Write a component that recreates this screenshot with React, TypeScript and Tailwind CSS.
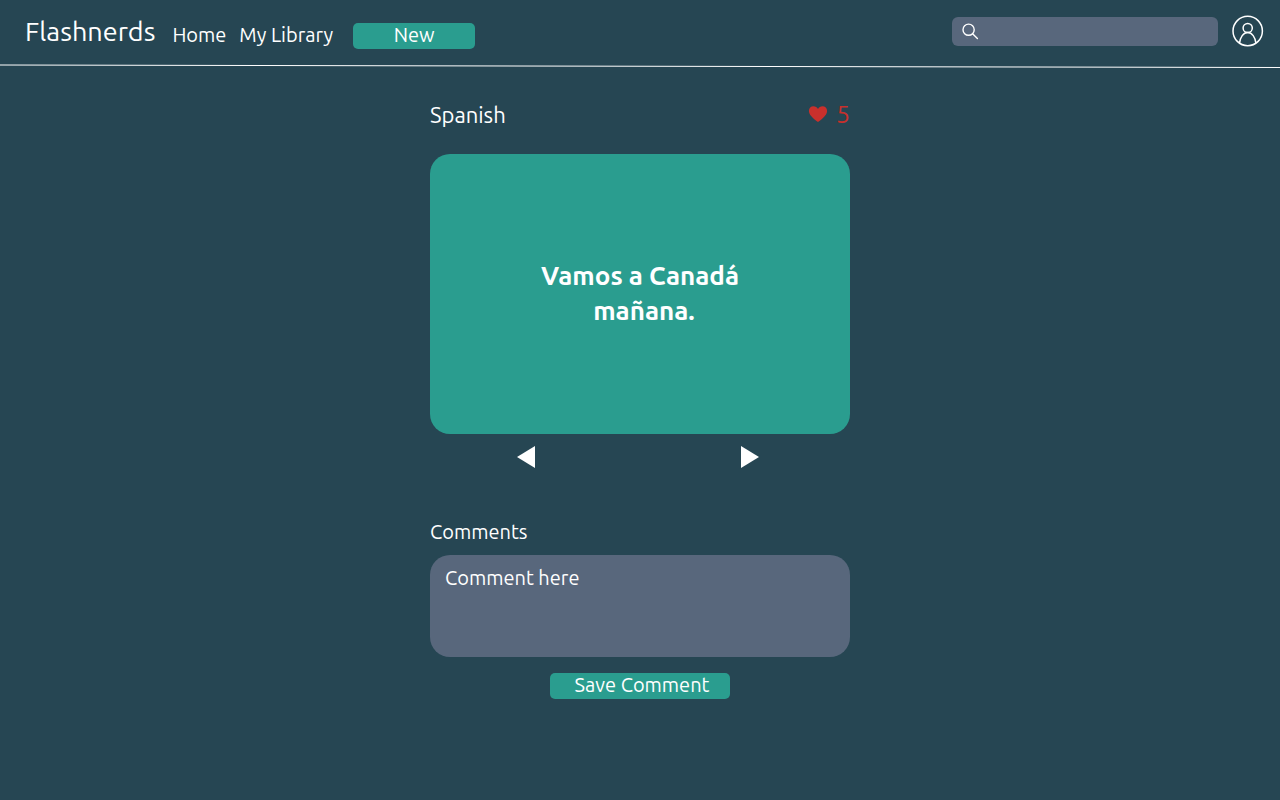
import { useState } from "react";

function SearchIcon() {
  return (
    <svg viewBox="0 0 18 18" className="size-[18px]" fill="none" stroke="currentColor" strokeWidth="1.4" strokeLinecap="round" aria-hidden="true">
      <circle cx="6.6" cy="7.7" r="5.6" />
      <path d="M10.600 11.700 15.400 16.500" />
    </svg>
  );
}

function ProfileIcon() {
  return (
    <svg viewBox="0 0 32 32" className="size-8" fill="none" stroke="currentColor" strokeWidth="1.5" aria-hidden="true">
      <circle cx="15.7" cy="16" r="14.7" />
      <circle cx="15.7" cy="13" r="4.6" />
      <path d="M7.500 28.200C8.200 22.200 11.300 17.600 15.700 17.600s7.500 4.600 8.200 10.600" />
    </svg>
  );
}

function HeartIcon() {
  return (
    <svg viewBox="0 0 20 18" className="h-[18px] w-5" fill="currentColor" aria-hidden="true">
      <path d="M10 17C7.500 15 .9 10.700.9 5.900.9 3.200 2.900 1.200 5.500 1.200 7.400 1.200 9 2.200 10 4c1-1.800 2.600-2.800 4.500-2.800 2.600 0 4.600 2 4.600 4.700C19.100 10.700 12.500 15 10 17Z" />
    </svg>
  );
}

function Header() {
  return (
    <header>
      <div className="flex h-16 items-start justify-between pr-4 pl-[25px]">
        <div className="flex items-start">
          <a href="#" className="pt-[15px] text-[27px] leading-8">Flashnerds</a>
          <nav className="flex gap-[13px] pt-[23px] pl-[17px] text-[20px] leading-6">
            <a href="#home">Home</a>
            <a href="#library">My Library</a>
          </nav>
          <button type="button" className="mt-[23px] ml-5 h-[26px] w-[122px] rounded-[5px] bg-[#2a9d8f] pb-[2px] text-[20px] leading-6">
            New
          </button>
        </div>
        <div className="flex items-center gap-[14px] pt-[15px]">
          <label className="flex h-[29px] w-[266px] items-center gap-2 rounded-md bg-[#58677c] pr-3 pl-[10px]">
            <SearchIcon />
            <input type="search" aria-label="Search" className="min-w-0 flex-1 bg-transparent text-base outline-none" />
          </label>
          <button type="button" aria-label="Profile">
            <ProfileIcon />
          </button>
        </div>
      </div>
      <svg viewBox="0 0 1280 4" preserveAspectRatio="none" className="block h-1 w-full" aria-hidden="true">
        <path d="M0 1 1280 3.500" stroke="white" strokeWidth="1" />
      </svg>
    </header>
  );
}

export default function App() {
  const [comment, setComment] = useState("");

  return (
    <div className="min-h-screen bg-[#264653] font-['Ubuntu','Noto_Sans',sans-serif] text-white">
      <Header />
      <main className="mx-auto flex w-full max-w-[420px] flex-col pt-8">
        <div className="flex h-8 items-start justify-between">
          <h1 className="text-[22px] leading-[30px]">Spanish</h1>
          <button type="button" aria-label="5 likes" className="flex items-center gap-2 text-[#c9302c]">
            <HeartIcon />
            <span className="text-[25px] leading-7">5</span>
          </button>
        </div>

        <section className="mt-[22px] flex h-[280px] items-center justify-center rounded-[20px] bg-[#2a9d8f] pb-[2px]">
          <p className="text-center text-[26px] leading-[35px] font-bold">
            Vamos a Canadá
            <br />
            <span className="pl-2">mañana.</span>
          </p>
        </section>

        <div className="flex justify-between pt-3 pr-[91px] pl-[87px]">
          <button type="button" aria-label="Previous card">
            <svg viewBox="0 0 18 22" className="h-[22px] w-[18px]" fill="currentColor" aria-hidden="true">
              <path d="M18 0v22L0 11Z" />
            </svg>
          </button>
          <button type="button" aria-label="Next card">
            <svg viewBox="0 0 18 22" className="h-[22px] w-[18px]" fill="currentColor" aria-hidden="true">
              <path d="M0 0v22l18-11Z" />
            </svg>
          </button>
        </div>

        <form className="flex flex-col pt-[52px]" onSubmit={(event) => event.preventDefault()}>
          <label htmlFor="comment" className="text-[20px] leading-6">Comments</label>
          <textarea
            id="comment"
            value={comment}
            onChange={(event) => setComment(event.target.value)}
            placeholder="Comment here"
            className="mt-[11px] h-[102px] resize-none rounded-[20px] bg-[#58677c] px-[15px] py-[11px] text-[20px] leading-6 outline-none placeholder:text-white"
          />
          <button type="submit" className="mt-4 h-[26px] w-[180px] self-center rounded-[5px] bg-[#2a9d8f] pb-[2px] pl-1 text-[20px] leading-6">
            Save Comment
          </button>
        </form>
      </main>
    </div>
  );
}
